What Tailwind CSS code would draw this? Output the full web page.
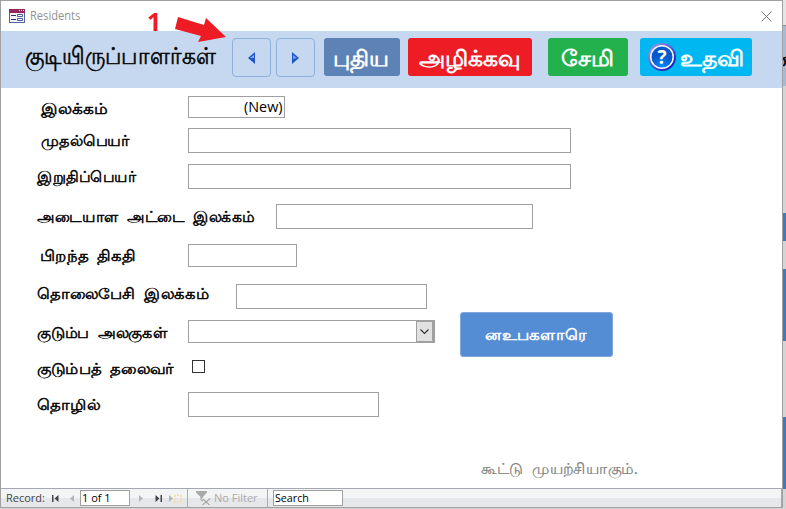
<!DOCTYPE html>
<html lang="ta"><head><meta charset="utf-8"><title>Residents</title>
<script src="https://cdn.jsdelivr.net/npm/@tailwindcss/browser@4"></script></head>
<body class="relative w-[786px] h-[509px] overflow-hidden bg-[#d4d4d4] font-['Open_Sans','Noto_Sans',sans-serif]">
<!-- window behind -->
<div class="absolute left-[780px] top-0 w-[6px] h-[509px] overflow-hidden bg-[#d4d4d4] flex flex-col">
<div class="h-[25px] shrink-0 bg-[#e6e6e6]"></div>
<div class="h-[61px] shrink-0 bg-[#a9b9cf] border-t border-[#8c8c8c] text-[20px] leading-[66px] font-semibold"><span class="-ml-2">ன</span></div>
<div class="h-[127px] shrink-0"></div><div class="h-[28px] shrink-0 bg-[#4677b6]"></div>
<div class="h-[28px] shrink-0"></div><div class="h-[72px] shrink-0 bg-[#4677b6]"></div>
<div class="h-[76px] shrink-0"></div><div class="h-[72px] shrink-0 bg-[#4677b6]"></div>
</div>
<main class="relative w-[783px] h-[508px] bg-white border border-[#a0a0a0] flex flex-col">
<header class="h-[30px] shrink-0 flex items-center pl-2 pr-[10px]">
<svg class="w-4 h-[14px]" viewBox="0 0 16 14"><rect x=".5" y=".5" width="15" height="13" fill="#f2f4fb" stroke="#5265a4"/><path d="M0 0H16V4H0Z" fill="#94275b"/><path d="M10 1.5h1M12 1.5h1M14 1.5h1" stroke="#fff"/><path d="M2 6.500H7M2 10.500H7" stroke="#26366f"/><path d="M8.500 5.500H13.500V7.500H8.500ZM8.500 9.500H13.500V11.500H8.500Z" fill="#fff" stroke="#4c5c99"/></svg>
<span data-w="50" class="inline-block whitespace-nowrap origin-left ml-[5px] text-[12px] leading-4 text-[#929292]">Residents</span>
<svg class="ml-auto w-[11px] h-[11px]" viewBox="0 0 11 11"><path d="M.5.5l10 10M10.500.5l-10 10" stroke="#777" fill="none"/></svg>
</header>
<section class="h-[57px] shrink-0 bg-[#c6d8f0] flex items-start pt-[7px] pl-6">
<h1 class="w-[207px] h-[38px] shrink-0 leading-[34px] text-[24px] text-black [-webkit-text-stroke:0.5px]"><span data-w="191" class="inline-block whitespace-nowrap origin-left">குடியிருப்பாளர்கள்</span></h1>
<button class="shrink-0 w-[39px] h-[39px] rounded-[4px] border border-[#8fb0da] flex items-center justify-center"><svg class="w-[7px] h-3" viewBox="0 0 7 12"><path d="M7 0V12L0 6Z" fill="#1f56c6"/><path d="M6 3V6H2Z" fill="#8cb2f1"/></svg></button>
<button class="shrink-0 ml-[5px] w-[39px] h-[39px] rounded-[4px] border border-[#8fb0da] flex items-center justify-center"><svg class="w-[7px] h-3" viewBox="0 0 7 12"><path d="M0 0V12L7 6Z" fill="#1f56c6"/><path d="M1 3V7L5 6Z" fill="#72a0ed"/></svg></button>
<button class="shrink-0 ml-[9px] w-[76px] h-[38px] rounded-[3px] bg-[#5d82b5] text-white font-bold text-[22px] leading-[38px] pl-[9px] text-left"><span data-w="56" class="inline-block whitespace-nowrap origin-left">புதிய</span></button>
<button class="shrink-0 ml-2 w-[124px] h-[38px] rounded-[3px] bg-[#ee1c25] text-white font-bold text-[22px] leading-[38px] pl-[11px] text-left"><span data-w="102" class="inline-block whitespace-nowrap origin-left">அழிக்கவு</span></button>
<button class="shrink-0 ml-4 w-[80px] h-[38px] rounded-[3px] bg-[#23b14d] text-white font-bold text-[22px] leading-[38px] pl-[13px] text-left"><span data-w="53" class="inline-block whitespace-nowrap origin-left">சேமி</span></button>
<button class="shrink-0 ml-3 w-[112px] h-[38px] rounded-[3px] bg-[#00b7f1] text-white font-bold text-[22px] leading-[38px] pl-2 flex items-center"><svg class="w-7 h-7 shrink-0" viewBox="0 0 28 28"><defs><linearGradient id="rim" x1="0" y1="0" x2="1" y2="1"><stop stop-color="#b3a6e5"/><stop offset=".5" stop-color="#4f5ad0"/><stop offset="1" stop-color="#0000a5"/></linearGradient><radialGradient id="orb" cx=".5" cy=".9"><stop stop-color="#0089ff"/><stop offset="1" stop-color="#0759ca"/></radialGradient></defs><circle cx="14" cy="14" r="14" fill="url(#rim)"/><circle cx="14" cy="14" r="12" fill="#f5faff"/><circle cx="14" cy="14" r="10.500" fill="url(#orb)"/><text x="14" y="20.500" text-anchor="middle" font-size="19" font-weight="bold" font-family="Open Sans" fill="#fff">?</text></svg><span data-w="64" class="inline-block whitespace-nowrap origin-left ml-1">உதவி</span></button>
</section>
<form class="h-[400px] shrink-0 relative flex flex-col pt-2 text-[15px] text-black">
<div class="h-8 flex items-start"><label class="w-[187px] shrink-0 pl-10 pt-[2px] leading-5 [-webkit-text-stroke:0.5px] [word-spacing:4px]"><span data-w="67" class="inline-block whitespace-nowrap origin-left">இலக்கம்</span></label><div class="w-[97px] h-[22px] border border-[#a0a0a0] text-right pr-px text-[14px] leading-5"><span data-w="39" class="inline-block whitespace-nowrap origin-right">(New)</span></div></div>
<div class="h-9 flex items-start"><label class="w-[187px] shrink-0 pl-10 pt-[2px] leading-5 [-webkit-text-stroke:0.5px] [word-spacing:4px]"><span data-w="89" class="inline-block whitespace-nowrap origin-left">முதல்பெயர்</span></label><div class="w-[383px] h-[25px] border border-[#a0a0a0]"></div></div>
<div class="h-10 flex items-start"><label class="w-[187px] shrink-0 pl-9 pt-[2px] leading-5 [-webkit-text-stroke:0.5px] [word-spacing:4px]"><span data-w="99" class="inline-block whitespace-nowrap origin-left">இறுதிப்பெயர்</span></label><div class="w-[383px] h-[25px] border border-[#a0a0a0]"></div></div>
<div class="h-10 flex items-start"><label class="w-[275px] shrink-0 pl-9 pt-[2px] leading-5 [-webkit-text-stroke:0.5px] [word-spacing:4px]"><span data-w="218" class="inline-block whitespace-nowrap origin-left">அடையாள அட்டை இலக்கம்</span></label><div class="w-[257px] h-[25px] border border-[#a0a0a0]"></div></div>
<div class="h-10 flex items-start"><label class="w-[187px] shrink-0 pl-[39px] pt-px leading-5 [-webkit-text-stroke:0.5px] [word-spacing:4px]"><span data-w="95" class="inline-block whitespace-nowrap origin-left">பிறந்த திகதி</span></label><div class="w-[109px] h-[23px] border border-[#a0a0a0]"></div></div>
<div class="h-9 flex items-start"><label class="w-[235px] shrink-0 pl-9 leading-[18px] [-webkit-text-stroke:0.5px] [word-spacing:4px]"><span data-w="172" class="inline-block whitespace-nowrap origin-left">தொலைபேசி இலக்கம்</span></label><div class="w-[191px] h-[25px] border border-[#a0a0a0]"></div></div>
<div class="h-9 flex items-start"><label class="w-[187px] shrink-0 pl-9 pt-[2px] leading-5 [-webkit-text-stroke:0.5px] [word-spacing:4px]"><span data-w="131" class="inline-block whitespace-nowrap origin-left">குடும்ப அலகுகள்</span></label><div class="w-[247px] h-[23px] border border-[#a0a0a0] flex justify-end"><div class="w-[18px] h-[21px] border border-r-2 border-[#a0a0a0] bg-[#e1e1e1] flex items-center justify-center"><svg class="w-[9px] h-[6px]" viewBox="0 0 9 6"><path d="M.5.5l4 4 4-4" fill="none" stroke="#333" stroke-width="1.200"/></svg></div></div></div>
<div class="h-9 flex items-start"><label class="w-[191px] shrink-0 pl-9 pt-[2px] leading-5 [-webkit-text-stroke:0.5px] [word-spacing:4px]"><span data-w="137" class="inline-block whitespace-nowrap origin-left">குடும்பத் தலைவர்</span></label><div class="mt-1 w-[13px] h-[13px] border border-[#333]"></div></div>
<div class="h-9 flex items-start"><label class="w-[187px] shrink-0 pl-9 pt-[2px] leading-5 [-webkit-text-stroke:0.5px] [word-spacing:4px]"><span data-w="63" class="inline-block whitespace-nowrap origin-left">தொழில்</span></label><div class="w-[191px] h-[25px] border border-[#a0a0a0]"></div></div>
<div class="absolute left-[459px] top-[224px] w-[153px] h-[45px] rounded-[3px] border border-[#7fa7dc] bg-[#558dd5] text-white font-bold text-[15px] leading-[43px] pl-6"><span data-w="102" class="inline-block whitespace-nowrap origin-left">னஉபகளாரெ</span></div>
<p class="pt-[30px] pl-[480px] text-[15px] leading-5 text-[#808080] [word-spacing:5px] [-webkit-text-stroke:0.2px]"><span data-w="157" class="inline-block whitespace-nowrap origin-left">கூட்டு முயற்சியாகும்.</span></p>
</form>
<footer class="h-[19px] shrink-0 border-t border-r border-[#a5a8b2] bg-linear-to-b from-[#f3f4f6] from-50% to-[#e5e7ea] to-50% flex items-center pl-[5px] text-[11px] text-[#444]">
<span class="w-[38px] shrink-0"><span data-w="39" class="inline-block whitespace-nowrap origin-left">Record:</span></span>
<svg class="shrink-0 ml-[8px] w-[7px] h-[7px]" viewBox="0 0 7 7"><path d="M0 0h1.500v7H0ZM6.500 0v7L2.500 3.500Z" fill="#444"/></svg>
<svg class="shrink-0 ml-[11px] w-1 h-[7px]" viewBox="0 0 4 7"><path d="M4 0v7L0 3.500Z" fill="#b5b5b5"/></svg>
<div class="shrink-0 ml-[6px] w-[50px] h-4 bg-white border border-[#a0a0a0] pl-px leading-[14px] text-black"><span data-w="29" class="inline-block whitespace-nowrap origin-left">1 of 1</span></div>
<svg class="shrink-0 ml-[9px] w-1 h-[7px]" viewBox="0 0 4 7"><path d="M0 0v7L4 3.500Z" fill="#b5b5b5"/></svg>
<svg class="shrink-0 ml-[12px] w-[7px] h-[7px]" viewBox="0 0 7 7"><path d="M5.500 0H7v7H5.500ZM.5 0v7L4.500 3.500Z" fill="#444"/></svg>
<svg class="shrink-0 ml-[7px] w-[13px] h-[9px]" viewBox="0 0 13 9"><path d="M0 1v7L4 4.500Z" fill="#b5b5b5"/><path d="M5 1h2v2H5ZM8 0h2v2H8ZM11 1h2v2h-2ZM5 4h2v2H5ZM11 4h2v2h-2ZM5 7h2v2H5ZM8 7h2v2H8ZM11 7h2v2h-2Z" fill="#f1dfae"/></svg>
<div class="shrink-0 ml-[5px] w-px h-full bg-[#acacac]"></div>
<svg class="shrink-0 ml-2 w-[15px] h-[15px]" viewBox="0 0 15 15"><path d="M0 0H11V1.500L7 6v5L4.500 9V6L0 1.500Z" fill="#aaa"/><path d="M6.500 7l7 7M13.500 7l-7 7" stroke="#f0f0f1" stroke-width="3"/><path d="M7 8l6.500 6M14 7.500L6.500 14" stroke="#aaa" stroke-width="1.500"/></svg>
<span class="shrink-0 w-[53px] ml-[3px] text-[#aaa]"><span data-w="44" class="inline-block whitespace-nowrap origin-left">No Filter</span></span>
<div class="shrink-0 w-px h-full bg-[#acacac]"></div>
<div class="shrink-0 ml-[5px] w-[70px] h-4 bg-white border border-[#a0a0a0] pl-px leading-[14px] text-black"><span data-w="34" class="inline-block whitespace-nowrap origin-left">Search</span></div>
</footer>
</main>
<!-- step marker and arrow over the toolbar -->
<span class="absolute left-[147px] top-[7px] text-[25px] leading-7 font-bold text-[#ed1c24]">1</span>
<svg class="absolute left-[174px] top-[15px] w-[54px] h-[28px]" viewBox="0 0 54 28"><path d="M4 2L30 10L32 3L52 22L24 27L27 21L1 14Z" fill="#ed1c24"/></svg>
<script>
function fitLabels(){document.querySelectorAll('[data-w]').forEach(e=>{e.style.transform='scaleX('+(e.dataset.w/e.offsetWidth)+')';});}
addEventListener('load',()=>{fitLabels();document.fonts.ready.then(fitLabels);setTimeout(fitLabels,50);});
addEventListener('resize',fitLabels);
new ResizeObserver(fitLabels).observe(document.querySelector('h1 span'));
</script>
</body></html>
